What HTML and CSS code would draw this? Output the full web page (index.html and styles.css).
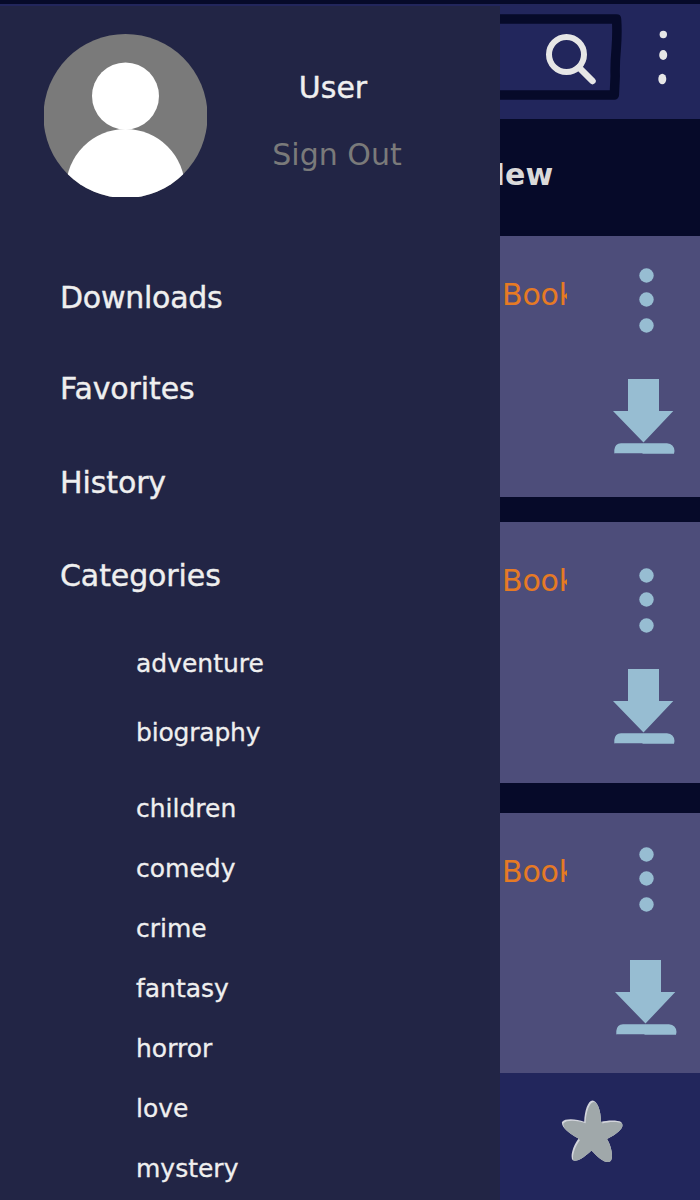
FILE: index.html
```html
<!DOCTYPE html>
<html lang="en">
<head>
<meta charset="utf-8">
<title>Book Library</title>
<link rel="stylesheet" href="styles.css">
</head>
<body>
<svg class="defs" aria-hidden="true">
  <symbol id="more" viewBox="0 0 16 66">
    <circle cx="8.500" cy="8.500" r="7.200"/><circle cx="8.500" cy="32.500" r="7.200"/><circle cx="8.500" cy="58.500" r="7.200"/>
  </symbol>
  <symbol id="download" viewBox="0 0 62 76">
    <path d="M15 0H46V32H60.300L30.500 63.500L0 32H15Z"/>
    <path d="M1.300 74.500V71Q2 64.500 8 64.300H54Q61 64.800 61.500 72L61 74.700H30L29 74.200H2Z"/>
  </symbol>
</svg>
<div class="screen">
  <main class="app">
    <header class="topbar">
      <svg class="topbar-art" viewBox="0 0 200 115">
        <path class="search-frame" d="M-5 15H116.500Q117.500 28 116.200 45Q114.800 60 115.200 72L114.300 91H-5"/>
        <circle class="lens" cx="66.500" cy="50.500" r="17.500"/>
        <path class="lens-handle" d="M79 63.500L92.500 77"/>
        <ellipse class="dot" cx="163.300" cy="30.500" rx="3.700" ry="3.700"/>
        <ellipse class="dot" cx="163.200" cy="51" rx="4" ry="5"/>
        <ellipse class="dot" cx="162.300" cy="75" rx="4" ry="5.200"/>
      </svg>
    </header>
    <div class="tabs"><span>New</span></div>
    <section class="card">
      <div class="title">Book</div>
      <div class="actions"><svg class="more"><use href="#more"/></svg><svg class="download"><use href="#download"/></svg></div>
    </section>
    <section class="card second">
      <div class="title">Book</div>
      <div class="actions"><svg class="more"><use href="#more"/></svg><svg class="download"><use href="#download"/></svg></div>
    </section>
    <section class="card third">
      <div class="title">Book</div>
      <div class="actions"><svg class="more"><use href="#more"/></svg><svg class="download"><use href="#download"/></svg></div>
    </section>
    <footer class="bottombar">
      <svg class="star" viewBox="0 0 64 66">
        <defs>
          <path id="star-shape" d="M32.500 1.500C37 1.500 41 11 41 23C47 21 58 21 61 23C65 27 61 33 47 40C51 46 53.500 57 51 61.500C47 66 39 60 31.500 51.500C25 58 16 64 12.500 61C10 57 13 47 18.500 39.500C9 35 1 28 2 23C5 19 17 20 24.200 22.800C24.500 12 28 1.500 32.500 1.500Z"/>
          <clipPath id="star-clip"><use href="#star-shape"/></clipPath>
        </defs>
        <use class="star-edge" href="#star-shape"/>
        <g clip-path="url(#star-clip)"><use class="star-fill" href="#star-shape" x="1.400" y="1.400"/></g>
      </svg>
    </footer>
  </main>
  <aside class="drawer">
    <div class="profile">
      <svg class="avatar" viewBox="0 0 163 163">
        <defs><clipPath id="disc"><circle cx="81.500" cy="82" r="82"/></clipPath></defs>
        <g clip-path="url(#disc)">
          <rect class="avatar-bg" width="163" height="163"/>
          <circle class="avatar-person" cx="81.500" cy="62" r="33.500"/>
          <circle class="avatar-person" cx="81.500" cy="154.500" r="59.500"/>
        </g>
      </svg>
      <div class="account"><span class="user">User</span><a class="signout">Sign Out</a></div>
    </div>
    <nav class="menu">
      <a class="downloads">Downloads</a>
      <a class="favorites">Favorites</a>
      <a class="history">History</a>
      <a class="categories">Categories</a>
    </nav>
    <nav class="submenu">
      <a class="adventure">adventure</a>
      <a class="biography">biography</a>
      <a>children</a>
      <a>comedy</a>
      <a>crime</a>
      <a>fantasy</a>
      <a>horror</a>
      <a>love</a>
      <a>mystery</a>
    </nav>
  </aside>
</div>
</body>
</html>
```
FILE: styles.css
```css
* { box-sizing: border-box; }
body { margin: 0; background: #060a29; font-family: "DejaVu Sans", Verdana, sans-serif; }
.defs { position: absolute; width: 0; height: 0; }
.screen { position: relative; width: 700px; height: 1200px; overflow: hidden; }
.app { display: flex; flex-direction: column; height: 100%; padding-top: 4px; background: #060a29; }
.topbar { height: 115px; flex: none; padding-left: 500px; background: #22265c; }
.topbar-art { display: block; width: 200px; height: 115px; }
.search-frame { fill: none; stroke: #060a29; stroke-width: 9.5; stroke-linejoin: round; }
.lens { fill: none; stroke: #e6e6e6; stroke-width: 6; }
.lens-handle { fill: none; stroke: #e6e6e6; stroke-width: 6.5; stroke-linecap: round; }
.dot { fill: #e6e6e6; }
.tabs { height: 117px; flex: none; padding: 38px 0 0 480px; color: #dadada; font-size: 30px; font-weight: bold; line-height: 36px; }
.card { display: flex; flex: none; justify-content: space-between; height: 261px; padding: 31px 23px 0 501px; background: #4d4d7a; margin-bottom: 25px; }
.card.second { margin-bottom: 30px; }
.card.third { height: 260px; margin-bottom: 0; }
.title { width: 66px; height: 52px; overflow: hidden; padding: 10px 0 0 1px; color: #e67a24; font-size: 30px; line-height: 36px; letter-spacing: -0.2px; }
.actions { display: flex; flex-direction: column; width: 64px; fill: #97bdd2; }
.more { display: block; width: 16px; height: 66px; margin-left: 25px; }
.download { display: block; width: 62px; height: 76px; margin-top: 46px; }
.second .more { margin-top: 14px; }
.second .download { margin-top: 36px; }
.third .more { margin-top: 2px; }
.third .download { margin: 48px 0 0 2px; }
.bottombar { flex: 1; padding: 26px 0 0 560px; background: #22265c; }
.star { display: block; width: 64px; height: 66px; }
.star-edge { fill: #d3d5dc; }
.star-fill { fill: #a0a8aa; }
.drawer { position: absolute; left: 0; top: 6px; width: 500px; height: 1194px; background: #222545; color: #efefef; }
.profile { display: flex; padding: 28px 0 0 44px; height: 192px; }
.avatar { flex: none; width: 163px; height: 163px; }
.avatar-bg { fill: #7a7a7a; }
.avatar-person { fill: #fff; }
.account { display: flex; flex-direction: column; align-items: center; width: 260px; padding-top: 36px; font-size: 30px; line-height: 36px; gap: 31px; }
.user { margin-right: 8px; -webkit-text-stroke: 0.4px #efefef; }
.signout { color: #7a7a7a; }
.menu { display: flex; flex-direction: column; padding: 82px 0 0 60px; font-size: 30px; line-height: 36px; letter-spacing: -0.1px; -webkit-text-stroke: 0.4px #efefef; }
.downloads { margin-bottom: 55px; letter-spacing: -0.25px; }
.favorites { margin-bottom: 58px; }
.history { margin-bottom: 57px; }
.submenu { display: flex; flex-direction: column; gap: 30px; padding: 55px 0 0 136px; font-size: 25px; line-height: 30px; -webkit-text-stroke: 0.3px #efefef; }
.adventure { margin-bottom: 9px; }
.biography { margin-bottom: 16px; letter-spacing: -0.2px; }
```
